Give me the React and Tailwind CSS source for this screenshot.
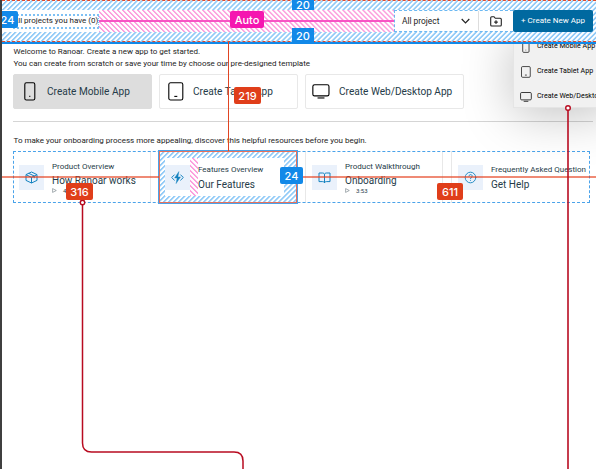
import React from "react";

const FONT = "font-['Roboto','Liberation_Sans',sans-serif]";
const HATCH_BLUE = "bg-[repeating-linear-gradient(135deg,#93cbf7_0px,#93cbf7_0.9px,#ffffff_1.7px,#ffffff_2.8px,#93cbf7_3.54px)]";
const HATCH_PINK = "bg-[repeating-linear-gradient(45deg,#fc9fdd_0px,#fc9fdd_0.7px,#ffffff_1.5px,#ffffff_2.8px,#fc9fdd_3.54px)]";

function Phone({ className }) {
  return (
    <svg className={className} viewBox="0 0 12 19" fill="none" stroke="currentColor" strokeWidth="1.1">
      <rect x="0.8" y="0.8" width="10" height="17.2" rx="1.6" />
      <path d="M5.3 14.4h1" />
    </svg>
  );
}

function Tablet({ className }) {
  return (
    <svg className={className} viewBox="0 0 16 19" fill="none" stroke="currentColor" strokeWidth="1.1">
      <rect x="0.8" y="0.8" width="14" height="17.2" rx="1.8" />
      <path d="M6.3 14.4h3" />
    </svg>
  );
}

function Monitor({ className }) {
  return (
    <svg className={className} viewBox="0 0 19 16" fill="none" stroke="currentColor" strokeWidth="1.2">
      <rect x="0.8" y="0.8" width="17.2" height="11.8" rx="1.8" />
      <path d="M5.8 14.9h7.4" />
    </svg>
  );
}

function Cube() {
  return (
    <svg className="h-[13px] w-[13px]" viewBox="0 0 13 13" fill="none" stroke="#1583c0" strokeWidth="1" strokeLinejoin="round">
      <path d="M6.5 1 12 3.6v5.8L6.5 12 1 9.4V3.6zM1 3.6l5.5 2.8L12 3.6M6.5 6.4V12M3.7 2.3l5.5 2.7v2.2" />
    </svg>
  );
}

function Bolt() {
  return (
    <svg className="h-[13px] w-[13px]" viewBox="0 0 13 13" fill="none" stroke="#1583c0" strokeWidth="1">
      <path d="M3.6 3.6.7 6.5l2.9 2.9M9.4 3.6l2.9 2.9-2.9 2.9" />
      <path d="M7.9.6 3.6 7h2.5l-1 5.6L9.5 5.9H6.9z" fill="#1583c0" strokeWidth=".4" />
    </svg>
  );
}

function Book() {
  return (
    <svg className="h-[13px] w-[13px]" viewBox="0 0 13 13" fill="none" stroke="#1583c0" strokeWidth="1" strokeLinejoin="round">
      <path d="M1 2h3.7c1 0 1.8.7 1.8 1.7V12c0-.8-.8-1.4-1.8-1.4H1zM12 2H8.3c-1 0-1.8.7-1.8 1.7V12c0-.8.8-1.4 1.8-1.4H12z" />
    </svg>
  );
}

function Help() {
  return (
    <svg className="h-[13px] w-[13px]" viewBox="0 0 13 13" fill="none" stroke="#1583c0" strokeWidth=".9" strokeLinecap="round">
      <circle cx="6.5" cy="6.5" r="5.3" />
      <path d="M4.9 5.1c0-2.1 3.3-2 3.3 0 0 1.2-1.7 1.3-1.7 2.500M6.5 9.3v.1" />
    </svg>
  );
}

function CreateCard({ icon, label, className, iconClass }) {
  return (
    <div className={`flex h-[35px] items-center rounded-[2px] border ${className}`}>
      <div className={`flex shrink-0 items-center ${iconClass}`}>{icon}</div>
      <span className="pt-[1px] text-[10.1px] leading-none whitespace-nowrap text-[#263c49]">{label}</span>
    </div>
  );
}

function Resource({ icon, kicker, title, time, className }) {
  return (
    <div className={`flex h-[52px] items-center pl-[6px] ${className}`}>
      <div className="flex h-[25px] w-[25px] shrink-0 items-center justify-center bg-[#eaf1fb]">{icon}</div>
      <div className="ml-[8px] flex flex-col whitespace-nowrap text-[#263c49]">
        <span className={`text-[8px] leading-[12px] ${time ? "" : "pt-[2px]"}`}>{kicker}</span>
        <span className={`text-[10px] leading-[16px] ${time ? "" : "pt-[1px]"}`}>{title}</span>
        {time && (
          <span className="-mt-[1px] flex items-center gap-[6px] text-[6px] leading-[6px]">
            <svg className="h-[5px] w-[5px]" viewBox="0 0 5 5" fill="none" stroke="#6b7980" strokeWidth=".6">
              <path d="M.6.6 4.3 2.5.6 4.4z" />
            </svg>
            {time}
          </span>
        )}
      </div>
    </div>
  );
}

function Badge({ children, className }) {
  return (
    <div className={`absolute z-30 flex items-center justify-center rounded-[2px] pt-[1px] font-['Inter',sans-serif] text-[11px] leading-none font-medium text-white ${className}`}>
      {children}
    </div>
  );
}

export default function App() {
  return (
    <div className={`relative h-[469px] w-[596px] overflow-hidden border-l-2 border-[#3f3f3f] bg-white text-[#1c1c1c] ${FONT}`}>
      <header className={`relative z-20 flex h-[44px] items-start border-b-2 border-[#1289e8] pt-[10px] ${HATCH_BLUE}`}>
        <div className="flex h-[22px] w-[97px] items-center bg-white pl-[11px]">
          <span className="h-[15px] w-[86px] border-y-2 border-r border-dotted border-[#7ec0f3] text-[8px] leading-[10px] whitespace-nowrap">All projects you have (0)</span>
        </div>
        <div className={`flex h-[22px] w-[295px] items-center ${HATCH_PINK}`}>
          <div className="h-[2px] w-full bg-[#f754c4]" />
        </div>
        <div className="flex h-[22px] w-[119px] border border-r-0 border-dashed border-[#6bb8f2] bg-white">
          <div className="flex w-[84px] items-center justify-between border-r border-solid border-[#dddddd] pr-[8px] pl-[7px] text-[8.4px]">
            All project
            <svg className="h-[6px] w-[9px]" viewBox="0 0 9 6" fill="none" stroke="#222" strokeWidth="1.2">
              <path d="m.7 1 3.8 3.8L8.3 1" />
            </svg>
          </div>
          <div className="flex flex-1 items-center justify-center">
            <svg className="h-[11px] w-[12px]" viewBox="0 0 12 11" fill="none" stroke="#222" strokeWidth="1.1">
              <path d="M.7 9V1.7q0-1 1-1H4l1.3 1.6h5q1 0 1 1V9q0 1-1 1h-8.600q-1 0-1-1zM6 4.3v3.6M4.2 6.1h3.6" />
            </svg>
          </div>
        </div>
        <button className="h-[22px] w-[80px] rounded-[2px] bg-[#0069a0] text-[8px] whitespace-nowrap text-white">+ Create New App</button>
      </header>
      <div className="absolute inset-x-0 top-0 z-20 h-[42px] border-y border-dashed border-[#e04a2a]" />
      <div className="absolute top-0 left-[-1px] z-20 h-[203px] border-l border-dashed border-[#e04a2a]" />

      <main className="pt-[2px] pl-[11px]">
        <div className="pl-[0.5px] text-[8px] leading-[12px] whitespace-nowrap">
          <p>Welcome to Ranoar. Create a new app to get started.</p>
          <p>You can create from scratch or save your time by choose our pre-designed template</p>
        </div>
        <div className="mt-[4px] flex gap-[7px]">
          <CreateCard className="w-[139px] border-[#dddddd] bg-[#dddddd] pl-[10px]" iconClass="w-[23px]" icon={<Phone className="h-[19px] w-[12px] text-black" />} label="Create Mobile App" />
          <CreateCard className="w-[139px] border-[#e8e8e8] pl-[8px]" iconClass="w-[25px]" icon={<Tablet className="h-[19px] w-[16px] text-black" />} label="Create Tablet App" />
          <CreateCard className="w-[159px] border-[#e8e8e8] pl-[6px]" iconClass="w-[27px]" icon={<Monitor className="h-[15px] w-[18px] text-black" />} label="Create Web/Desktop App" />
        </div>
        <div className="mt-[12px] h-px w-[580px] bg-[#d5d5d5]" />
        <p className="mt-[13px] pl-[0.5px] text-[8px] leading-[12px] whitespace-nowrap">To make your onboarding process more appealing, discover this helpful resources before you begin.</p>
        <section className="relative mt-[4px] flex h-[52px] w-[577px] gap-[8px]">
          <div className="absolute inset-0 border border-dashed border-[#4aa3ea]" />
          <Resource className="w-[138px] border-r border-[#e8e8e8]" icon={<Cube />} kicker="Product Overview" title="How Ranoar works" time="4:03" />
          <div className={`relative h-[52px] w-[138px] outline-2 -outline-offset-1 outline-[#4aa3ea] ${HATCH_BLUE}`}>
            <div className="absolute inset-0 border border-[#e8705a]" />
            <div className="ml-[6px] h-full py-[7px]">
              <div className="flex h-[38px] w-[119px] items-center bg-white">
                <Resource className="-ml-[6px]" icon={<Bolt />} kicker="Features Overview" title="Our Features" />
              </div>
            </div>
            <div className={`absolute top-[7px] left-[31px] h-[38px] w-[8px] ${HATCH_PINK}`} />
          </div>
          <Resource className="w-[138px] border-x border-[#e8e8e8]" icon={<Book />} kicker="Product Walkthrough" title="Onboarding" time="3:53" />
          <Resource className="w-[138px] border-l border-[#e8e8e8]" icon={<Help />} kicker="Frequently Asked Question" title="Get Help" />
        </section>
      </main>

      <div className="absolute top-[33px] left-[511px] z-10 flex h-[75px] w-[100px] flex-col border border-[#e5e5e5] bg-[#f1f1f1] pl-[6px] shadow-[0_6px_50px_rgba(0,0,0,0.25)]">
        {[
          [<Phone key="p" className="h-[12px] w-[8px]" />, "Create Mobile App"],
          [<Tablet key="t" className="h-[12px] w-[10px]" />, "Create Tablet App"],
          [<Monitor key="m" className="h-[10px] w-[12px]" />, "Create Web/Desktop App"],
        ].map(([icon, label]) => (
          <div key={label} className="flex h-[25px] shrink-0 items-center gap-[5px] text-[7.1px] whitespace-nowrap text-black">
            <span className="flex w-[12px] justify-center">{icon}</span>
            {label}
          </div>
        ))}
      </div>

      <svg className="absolute top-0 left-[-2px] z-20 h-[469px] w-[596px]" viewBox="0 0 596 469" fill="none">
        <path d="M228.5 42v109" stroke="#e04523" />
        <path d="M2 177h157M298 177h298" stroke="#e53c19" strokeOpacity=".6" strokeWidth="2" />
        <path d="M82.500 205V443q0 9 9 9H234q9 0 9 9v8" stroke="#b80b20" strokeWidth="1.5" />
        <path d="M568 110V469" stroke="#b80b20" strokeOpacity=".8" strokeWidth="2" />
        <circle cx="82.500" cy="202.500" r="2.200" fill="white" stroke="#b80b20" strokeWidth="1.4" />
        <circle cx="568" cy="108" r="2.300" fill="white" stroke="#b80b20" strokeWidth="1.4" />
      </svg>

      <Badge className="top-[11px] left-[-2px] h-[17px] w-[18px] bg-[#1289e8] pr-[3px]">24</Badge>
      <Badge className="top-[-1px] left-[290px] h-[11px] w-[22px] rounded-none bg-[#1289e8]">20</Badge>
      <Badge className="top-[28px] left-[290px] h-[16px] w-[22px] rounded-none bg-[#1289e8]">20</Badge>
      <Badge className="top-[11px] left-[228px] h-[17px] w-[34px] bg-[#f516b0]">Auto</Badge>
      <Badge className="top-[87px] left-[232px] h-[17px] w-[27px] bg-[#e03e1a]">219</Badge>
      <Badge className="top-[183px] left-[64px] h-[17px] w-[27px] bg-[#e03e1a]">316</Badge>
      <Badge className="top-[183px] left-[435px] h-[17px] w-[26px] bg-[#e03e1a]">611</Badge>
      <Badge className="top-[167px] left-[278px] h-[17px] w-[23px] bg-[#1289e8]">24</Badge>
    </div>
  );
}
